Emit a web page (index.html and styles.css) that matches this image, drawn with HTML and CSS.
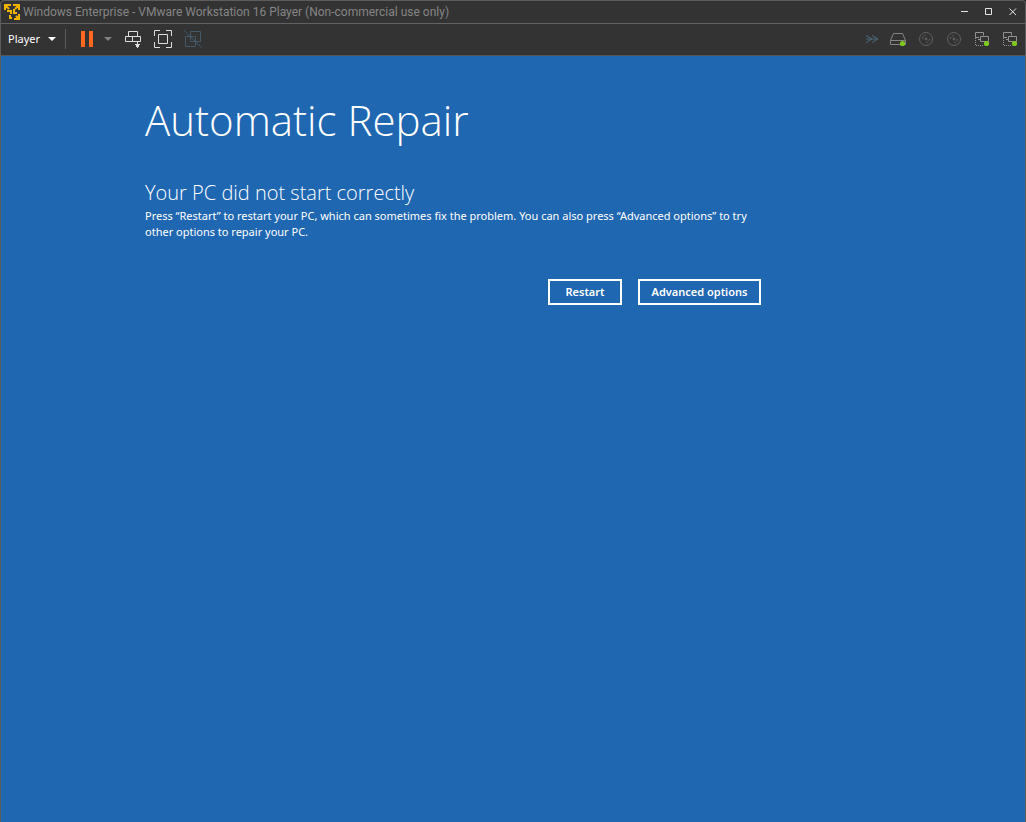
FILE: index.html
```html
<!DOCTYPE html>
<html lang="en">
<head>
<meta charset="utf-8">
<title>Windows Enterprise - VMware Workstation 16 Player</title>
<link rel="stylesheet" href="styles.css">
</head>
<body>
<div class="window">
  <header class="titlebar">
    <svg class="logo" width="16" height="16" viewBox="0 0 16 16" fill="none" stroke="#f0b400" stroke-width="2">
      <path d="M1 6V1h6M1 1l4 4M9 1h6v5M15 1l-4 4M15 10v5h-5M15 15l-3-3M3 7h4v3M10 5v4h3M6 11v3h2"/>
    </svg>
    <span class="caption">Windows Enterprise - VMware Workstation 16 Player (Non-commercial use only)</span>
    <div class="window-buttons">
      <button type="button" aria-label="Minimize"><svg width="8" height="8" viewBox="0 0 8 8"><path d="M0 3.5h7" stroke="#e4e4e4"/></svg></button>
      <button type="button" aria-label="Maximize"><svg width="8" height="8" viewBox="0 0 8 8"><path d="M.5.5h6v6h-6z" fill="none" stroke="#e4e4e4"/></svg></button>
      <button type="button" aria-label="Close"><svg width="8" height="8" viewBox="0 0 8 8"><path d="M.5.5l6.500 6.500M7 .5L.5 7" stroke="#e4e4e4"/></svg></button>
    </div>
  </header>
  <nav class="toolbar">
    <button type="button" class="player-menu">Player
      <svg width="8" height="4" viewBox="0 0 8 4"><path d="M0 0h8L4 4z" fill="#fff"/></svg>
    </button>
    <span class="separator"></span>
    <button type="button" class="pause" aria-label="Suspend"><svg width="12" height="16" viewBox="0 0 12 16"><path d="M0 0h4v16H0zM8 0h4v16H8z" fill="#ff6720"/></svg></button>
    <button type="button" class="power-menu" aria-label="Power options"><svg width="8" height="4" viewBox="0 0 8 4"><path d="M0 0h8L4 4z" fill="#808080"/></svg></button>
    <div class="tools">
      <button type="button" aria-label="Send Ctrl+Alt+Del"><svg width="18" height="18" viewBox="0 0 18 18" fill="none" stroke="#dedede"><path d="M4.500 1.500h9v5h-9zM1.500 6.500h15v5h-15zM8.500 6.500v5"/><path d="M11 12h6v3h-6z" fill="#333" stroke="none"/><path d="M13.500 11v7M11 14.500h5M12 15.500h3M12 16.500h3"/></svg></button>
      <button type="button" aria-label="Full screen"><svg width="18" height="18" viewBox="0 0 18 18" fill="none" stroke="#dedede"><path d="M.5 6V.5H6M12 .5h5.500V6M17.500 12v5.500H12M6 17.500H.5V12M4.500 4.500h9v9h-9z"/></svg></button>
      <button type="button" aria-label="Unity" disabled><svg width="18" height="18" viewBox="0 0 18 18" fill="none" stroke="#435967"><path d="M6.500 10.500v-9h10v10h-10M1.500 6.500h10v10h-10zM0 .5l17.500 17"/></svg></button>
    </div>
    <div class="devices">
      <button type="button" aria-label="Hide devices"><svg width="16" height="16" viewBox="0 0 16 16" fill="none" stroke="#4b6b7d"><path d="M4 4.500l6 3.500-6 3.500M10 4.500l6 3.500-6 3.500M4 8h11"/></svg></button>
      <button type="button" aria-label="Hard disk"><svg width="16" height="16" viewBox="0 0 16 16" fill="none" stroke="#858585"><path d="M3.500 2.500h9l3 7v4H.5v-4zM.5 9.500h15"/><circle cx="12.500" cy="12.500" r="2.600" fill="#7fc91d" stroke="none"/></svg></button>
      <button type="button" aria-label="CD/DVD 1" disabled><svg width="16" height="16" viewBox="0 0 16 16" fill="none" stroke="#606060"><circle cx="8" cy="8" r="6.500"/><circle cx="8" cy="8" r="1" fill="#606060"/><path d="M4.500 8A3.500 3.500 0 0 1 8 4.500M11.500 8A3.500 3.500 0 0 1 8 11.500" stroke-dasharray="2 1"/></svg></button>
      <button type="button" aria-label="CD/DVD 2" disabled><svg width="16" height="16" viewBox="0 0 16 16" fill="none" stroke="#606060"><circle cx="8" cy="8" r="6.500"/><circle cx="8" cy="8" r="1" fill="#606060"/><path d="M4.500 8A3.500 3.500 0 0 1 8 4.500M11.500 8A3.500 3.500 0 0 1 8 11.500" stroke-dasharray="2 1"/></svg></button>
      <button type="button" aria-label="Network adapter 1"><svg width="16" height="16" viewBox="0 0 16 16" fill="none" stroke="#929292"><path d="M5 6.500H1.500v-5h8v3M6.500 5.500h8v5h-8zM4 8.500h2"/><path d="M1.500 7v8M2 14.500h8" stroke-dasharray="1 1"/><circle cx="12.500" cy="12.500" r="2.600" fill="#7fc91d" stroke="none"/></svg></button>
      <button type="button" aria-label="Network adapter 2"><svg width="16" height="16" viewBox="0 0 16 16" fill="none" stroke="#929292"><path d="M5 6.500H1.500v-5h8v3M6.500 5.500h8v5h-8zM4 8.500h2"/><path d="M1.500 7v8M2 14.500h8" stroke-dasharray="1 1"/><circle cx="12.500" cy="12.500" r="2.600" fill="#7fc91d" stroke="none"/></svg></button>
    </div>
  </nav>
  <main class="screen">
    <section class="repair">
      <h1>Automatic Repair</h1>
      <h2>Your PC did not start correctly</h2>
      <p>Press “Restart” to restart your PC, which can sometimes fix the problem. You can also press “Advanced options” to try other options to repair your PC.</p>
      <div class="actions">
        <button type="button" class="restart">Restart</button>
        <button type="button" class="advanced">Advanced options</button>
      </div>
    </section>
  </main>
</div>
</body>
</html>
```
FILE: styles.css
```css
* { box-sizing: border-box; }
body { margin: 0; background: #202020; font-family: "Noto Sans", "Open Sans", sans-serif; }
button { display: flex; align-items: center; justify-content: center; margin: 0; padding: 0; border: 0; background: none; color: #fff; font-family: inherit; }
svg { display: block; flex: none; }

.window { display: flex; flex-direction: column; min-height: 100vh; border: 1px solid #5c5c5c; border-bottom: 0; border-radius: 4px 4px 0 0; overflow: hidden; background: #333; }

.titlebar { display: flex; align-items: center; height: 23px; padding-left: 3px; border-bottom: 1px solid #626262; }
.caption { margin-left: 3px; color: #858585; font-family: Roboto, sans-serif; font-size: 12px; line-height: 16px; white-space: nowrap; }
.window-buttons { display: flex; margin-left: auto; }
.window-buttons button { width: 24px; height: 22px; }

.toolbar { display: flex; align-items: center; height: 32px; padding: 0 7px 1px 0; border-bottom: 1px solid #555; }
.player-menu { gap: 8px; padding-left: 7px; font-size: 11px; line-height: 16px; }
.separator { width: 1px; height: 20px; margin-left: 9px; background: #5c5c5c; }
.pause { width: 12px; height: 24px; margin-left: 15px; }
.power-menu { width: 8px; height: 24px; margin-left: 11px; }
.tools { display: flex; gap: 12px; margin-left: 12px; }
.devices { display: flex; gap: 12px; margin-left: auto; }

.screen { flex: 1; padding: 34px 24px 24px 144px; background: #1f67b1; color: #fff; }
.repair { max-width: 616px; }
h1 { margin: 0; font-family: "Open Sans", sans-serif; font-size: 42px; line-height: 60px; font-weight: 300; }
h2 { margin: 29px 0 0; font-family: "Open Sans", sans-serif; font-size: 20px; line-height: 28px; font-weight: 300; }
p { margin: 1px 0 0; font-size: 11px; line-height: 16px; }
.actions { display: flex; justify-content: flex-end; gap: 16px; margin-top: 39px; }
.actions button { height: 26px; border: 2px solid #fff; font-size: 11px; line-height: 16px; font-weight: 600; }
.restart { width: 74px; }
.advanced { width: 123px; }
```
